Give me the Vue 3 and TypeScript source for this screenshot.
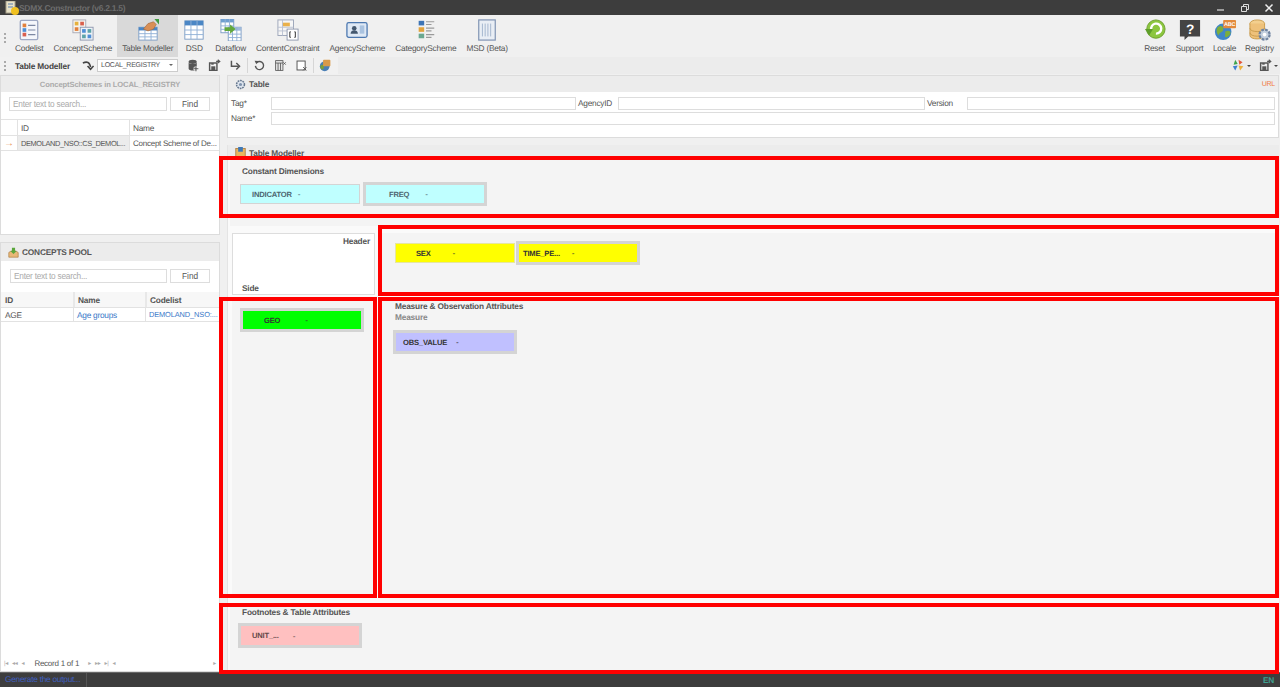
<script setup lang="ts">
type Tool = { label: string; svg: string; active?: boolean };

const tile = (inner: string) => `<svg viewBox="0 0 24 24" width="22" height="22">${inner}</svg>`;

const grid = (x: number, y: number, w: number, h: number, head = '#4a86c5') =>
  `<rect x="${x}" y="${y}" width="${w}" height="${h}" fill="#fff" stroke="#7c9cc4"/>` +
  `<rect x="${x}" y="${y}" width="${w}" height="${h / 4}" fill="${head}"/>` +
  `<path d="M${x} ${y + h / 2}h${w}M${x} ${y + (h * 3) / 4}h${w}M${x + w / 3} ${y}v${h}M${x + (w * 2) / 3} ${y}v${h}" stroke="#8fb0d6" fill="none"/>`;

const leftTools: Tool[] = [
  {
    label: 'Codelist',
    svg: tile(
      '<rect x="2.5" y="1.5" width="19" height="21" rx="1.5" fill="#f4f6fb" stroke="#9fa9c4" stroke-width="1.5"/>' +
        '<rect x="5" y="5" width="4" height="4" fill="#e2803c"/><rect x="5" y="10" width="4" height="4" fill="#4f8fd6"/><rect x="5" y="15" width="4" height="4" fill="#d96050"/>' +
        '<path d="M11 7h8M11 12h8M11 17h8" stroke="#7d88a3" stroke-width="1.2"/>'
    )
  },
  {
    label: 'ConceptScheme',
    svg: tile(
      '<rect x="1" y="1" width="14" height="14" fill="#f6f4ef" stroke="#a9a9b5"/><rect x="3" y="3" width="4" height="4" fill="#e6b13c"/><rect x="9" y="3" width="4" height="4" fill="#d9604c"/><rect x="3" y="9" width="4" height="4" fill="#e2803c"/>' +
        '<rect x="9" y="9" width="14" height="14" fill="#eef2f7" stroke="#8d97ad"/><rect x="11" y="11" width="4" height="4" fill="#4f8fd6"/><rect x="17" y="11" width="4" height="4" fill="#5ba3a8"/><rect x="11" y="17" width="4" height="4" fill="#5ba3a8"/><rect x="17" y="17" width="4" height="4" fill="#4f8fd6"/>'
    )
  },
  {
    label: 'Table Modeller',
    active: true,
    svg: tile(
      grid(2, 9, 20, 14) +
        '<path d="M7 11l5-6 6-2 3 3-3 5-6 2z" fill="#d98f55" stroke="#9a5f33" stroke-width=".6"/><path d="M19 0h5v6z" fill="#3f9b3f"/>'
    )
  },
  { label: 'DSD', svg: tile(grid(2, 2, 20, 20)) },
  {
    label: 'Dataflow',
    svg: tile(
      grid(1, 0, 14, 15, '#6f9fd0') + grid(9, 9, 14, 15, '#9fbadb') + '<path d="M5 9h6V6l6 5-6 5v-3H5z" fill="#62a83c"/>'
    )
  },
  {
    label: 'ContentConstraint',
    svg: tile(
      '<rect x="1" y="1" width="17" height="17" fill="#f6f6f6" stroke="#9aa3b8"/><rect x="6" y="4" width="8" height="4" fill="#e9b04a"/><path d="M1 9h17M1 13h17M6 1v17" stroke="#b9c1d1" fill="none"/>' +
        '<rect x="11" y="11" width="12" height="12" fill="#fff" stroke="#8d97ad"/><path d="M15 14h-1v6h1M19 14h1v6h-1" stroke="#222" fill="none"/>'
    )
  },
  {
    label: 'AgencyScheme',
    svg: tile(
      '<rect x="1" y="4" width="22" height="16" rx="2" fill="#dfe9f5" stroke="#4c78b0" stroke-width="1.4"/><circle cx="9" cy="10" r="2.5" fill="#44586f"/><path d="M5 16c0-5 8-5 8 0z" fill="#44586f"/><rect x="15" y="7" width="5" height="9" fill="#aac3e0"/>'
    )
  },
  {
    label: 'CategoryScheme',
    svg: tile(
      '<rect x="4" y="2" width="6" height="5" fill="#3d74b5"/><rect x="4" y="9" width="6" height="5" fill="#e2a33c"/><rect x="4" y="16" width="6" height="5" fill="#6aa890"/>' +
        '<path d="M12 3h9M12 6h6M12 10h9M12 13h6M12 17h9M12 20h6" stroke="#9a9a9a" stroke-width="1.3"/>'
    )
  },
  {
    label: 'MSD (Beta)',
    svg: tile(
      '<rect x="3" y="1" width="18" height="22" fill="#e9eef5" stroke="#7f93b3" stroke-width="1.3"/><path d="M7 5v14M10 5v14M13 5v14M16 5v14" stroke="#9fb2cc"/>'
    )
  }
];

const rightTools: Tool[] = [
  {
    label: 'Reset',
    svg: tile(
      '<circle cx="13" cy="11" r="10" fill="#8cc63f" stroke="#6b9e2d"/><path d="M8 12a5.5 5.5 0 1 1 5 4" fill="none" stroke="#fff" stroke-width="2.6"/><path d="M1 11h9l-4.500 7z" fill="#5f9e2a"/>'
    )
  },
  {
    label: 'Support',
    svg: `<svg viewBox="0 0 24 24" width="22" height="22"><path d="M1 1h22v18H10l-4 4v-4H1z" fill="#444"/><text x="12" y="16" text-anchor="middle" font-family="Liberation Sans" font-weight="700" font-size="15" fill="#fff">?</text></svg>`
  },
  {
    label: 'Locale',
    svg: `<svg viewBox="0 0 24 24" width="22" height="22"><circle cx="10" cy="14" r="9" fill="#3f86c8"/><path d="M4 9c4-3 7 0 6 3s-4 2-5 6c-2-2-3-6-1-9zM12 14c3-2 6-1 6 1s-3 5-5 5 0-4-1-6z" fill="#7cae3c"/><rect x="10" y="1" width="14" height="9" rx="1" fill="#e28a3c"/><text x="17" y="8" text-anchor="middle" font-family="Liberation Sans" font-weight="700" font-size="6" fill="#fff">ABC</text></svg>`
  },
  {
    label: 'Registry',
    svg: tile(
      '<ellipse cx="9" cy="5" rx="8" ry="4" fill="#f3cf8e" stroke="#c89a4a"/><path d="M1 5v13c0 5 16 5 16 0V5" fill="#eec17a" stroke="#c89a4a"/><path d="M1 10c0 5 16 5 16 0M1 15c0 5 16 5 16 0" fill="none" stroke="#c89a4a"/>' +
        '<circle cx="17" cy="17" r="5.500" fill="#c3cfdd" stroke="#6f83a0" stroke-width="2.4" stroke-dasharray="3 1.300"/><circle cx="17" cy="17" r="2" fill="#fff"/>'
    )
  }
];

const gray = '#555';
const barIcons = {
  db: `<ellipse cx="7" cy="3.500" rx="5" ry="2.500" fill="${gray}"/><path d="M2 4v8c0 3 10 3 10 0V4c0 3-10 3-10 0z" fill="${gray}"/><path d="M11 9v6M8 12h6" stroke="#fff" stroke-width="3"/><path d="M11 9v6M8 12h6" stroke="${gray}" stroke-width="1.400"/>`,
  save: `<path d="M2 5h9v9H2z" fill="none" stroke="${gray}" stroke-width="1.800"/><rect x="4" y="9" width="5" height="5" fill="${gray}"/><rect x="4" y="5" width="3" height="2" fill="${gray}"/><path d="M10 3h4M12 1l2.500 2-2.500 2" fill="none" stroke="${gray}" stroke-width="1.400"/>`,
  enter: `<path d="M3 2v7h9" fill="none" stroke="${gray}" stroke-width="1.800"/><path d="M9 5l4 4-4 4" fill="none" stroke="${gray}" stroke-width="1.800"/>`,
  undo: `<path d="M4.500 4.500a5 5 0 1 1-1.500 4" fill="none" stroke="${gray}" stroke-width="1.700"/><path d="M2 2l5 .5-3 4z" fill="${gray}"/>`,
  del: `<rect x="2" y="2" width="9" height="12" fill="#e4e4e4" stroke="${gray}"/><path d="M2 5h9M5 5v9M8 5v9" stroke="${gray}" fill="none"/><path d="M11.500 4l3 3M14.500 4l-3 3" stroke="${gray}"/>`,
  clear: `<rect x="2.500" y="2.500" width="10" height="11" fill="#fff" stroke="${gray}" stroke-width="1.200"/><path d="M10 10l4 4M14 10l-4 4" stroke="${gray}" stroke-width="1.200"/>`,
  globe: `<circle cx="7" cy="9" r="6" fill="#4a7fb5"/><path d="M2 8c3-2 5 0 4 3s-2 1-3 2c-1-1-2-3-1-5z" fill="#7a9e3c"/><rect x="5" y="1" width="9" height="8" rx="1" fill="#d99a4a"/>`,
  pin: `<path d="M4 1l3 5-5 1z" fill="#3fa34d"/><path d="M8 1l1 6 4-3z" fill="#e2553c"/><path d="M1 9l6-1-3 6z" fill="#3f7fd0"/><path d="M8 8l6 1-4 5z" fill="#eeb23c"/>`
};

const leftBar = ['db', 'save', 'enter'];
const midBar = ['undo', 'del', 'clear'];

const pagerLeft = ['|◂', '◂◂', '◂'];
const pagerRight = ['▸', '▸▸', '▸|', '◂'];

// the red annotation boxes drawn over the screenshot
const marks = [
  { left: 219, top: 156, width: 1060, height: 62 },
  { left: 378, top: 225, width: 901, height: 71 },
  { left: 219, top: 297, width: 158, height: 301 },
  { left: 378, top: 297, width: 901, height: 301 },
  { left: 219, top: 603, width: 1060, height: 71 }
];
</script>

<template>
  <div class="app">
    <header class="titlebar">
      <svg class="app-logo" viewBox="0 0 14 14" width="14" height="14">
        <rect x="1" y="0" width="9" height="12" fill="#e8e2c8" stroke="#a7a08a" />
        <path d="M3 3h5M3 6h5" stroke="#5a7fb0" />
        <circle cx="10" cy="10" r="4" fill="#f0c020" />
      </svg>
      <span class="app-title">SDMX.Constructor (v6.2.1.5)</span>
      <div class="win-btns">
        <svg viewBox="0 0 10 10" width="10" height="10"><path d="M1 7h7" stroke="#ddd" stroke-width="1.200" /></svg>
        <svg viewBox="0 0 10 10" width="10" height="10"><path d="M1.500 3.500h5v5h-5zM3.500 3V1.500h5v5H7" fill="none" stroke="#ddd" /></svg>
        <svg viewBox="0 0 10 10" width="10" height="10"><path d="M1.500 1.500l7 7M8.500 1.500l-7 7" stroke="#eee" stroke-width="1.500" /></svg>
      </div>
    </header>

    <nav class="ribbon">
      <span class="grip"></span>
      <div v-for="t in leftTools" :key="t.label" class="tool" :class="{ active: t.active }">
        <span class="tool-icon" v-html="t.svg"></span>
        <span class="tool-label">{{ t.label }}</span>
      </div>
      <div class="spacer"></div>
      <div v-for="t in rightTools" :key="t.label" class="tool tool-right">
        <span class="tool-icon" v-html="t.svg"></span>
        <span class="tool-label">{{ t.label }}</span>
      </div>
    </nav>

    <div class="toolbar">
      <span class="grip small"></span>
      <b class="bar-title">Table Modeller</b>
      <svg class="bar-arrow" viewBox="0 0 14 12" width="12" height="11">
        <path d="M1 3c5-2 8-1 9 5" fill="none" stroke="#444" stroke-width="1.800" />
        <path d="M6.500 6.500l3.500 4 3.500-4" fill="none" stroke="#444" stroke-width="1.800" />
      </svg>
      <div class="bar-select">LOCAL_REGISTRY<span class="caret"></span></div>
      <div class="bar-group">
        <svg v-for="k in leftBar" :key="k" class="bar-ico" viewBox="0 0 16 16" width="13" height="13" v-html="barIcons[k as keyof typeof barIcons]"></svg>
      </div>
      <span class="bar-sep"></span>
      <div class="bar-group">
        <svg v-for="k in midBar" :key="k" class="bar-ico" viewBox="0 0 16 16" width="13" height="13" v-html="barIcons[k as keyof typeof barIcons]"></svg>
      </div>
      <span class="bar-sep"></span>
      <svg class="bar-ico" viewBox="0 0 16 16" width="13" height="13" v-html="barIcons.globe"></svg>
      <div class="spacer"></div>
      <svg class="bar-ico" viewBox="0 0 16 16" width="13" height="13" v-html="barIcons.pin"></svg>
      <span class="caret tiny"></span>
      <svg class="bar-ico last" viewBox="0 0 16 16" width="13" height="13" v-html="barIcons.save"></svg>
      <span class="caret tiny"></span>
    </div>

    <main class="content">
      <aside class="sidebar">
        <section class="side-panel top">
          <div class="panel-head center">ConceptSchemes in LOCAL_REGISTRY</div>
          <div class="search">
            <input class="search-input" placeholder="Enter text to search..." />
            <button class="find">Find</button>
          </div>
          <div class="row head-row schemes">
            <span class="cell"></span><span class="cell">ID</span><span class="cell">Name</span>
          </div>
          <div class="row schemes">
            <span class="cell arrow">→</span>
            <span class="cell picked">DEMOLAND_NSO::CS_DEMOL...</span>
            <span class="cell tiny-text">Concept Scheme of De...</span>
          </div>
        </section>

        <section class="side-panel bottom">
          <div class="panel-head">
            <svg viewBox="0 0 14 14" width="11" height="11">
              <path d="M1 7l3-2h6l3 2v6H1z" fill="#e8b878" stroke="#a9763a" stroke-width=".8" />
              <path d="M5 1h4v4h2L7 9 3 5h2z" fill="#5aa63c" />
            </svg>
            <b>CONCEPTS POOL</b>
          </div>
          <div class="search pool">
            <input class="search-input" placeholder="Enter text to search..." />
            <button class="find">Find</button>
          </div>
          <div class="row pool-head concepts">
            <b class="cell">ID</b><b class="cell">Name</b><b class="cell">Codelist</b>
          </div>
          <div class="row concepts">
            <span class="cell">AGE</span>
            <span class="cell link">Age groups</span>
            <span class="cell link caps">DEMOLAND_NSO:...</span>
          </div>
          <div class="pager">
            <span v-for="(p, i) in pagerLeft" :key="i" class="pg">{{ p }}</span>
            <span class="pg-text">Record 1 of 1</span>
            <span v-for="(p, i) in pagerRight" :key="i" class="pg">{{ p }}</span>
            <span class="spacer"></span>
            <span class="pg">▸</span>
          </div>
        </section>
      </aside>

      <div class="workspace">
        <section class="table-panel">
          <div class="panel-head">
            <svg viewBox="0 0 14 14" width="11" height="11">
              <circle cx="7" cy="7" r="5" fill="#dfe6ef" stroke="#66788f" stroke-width="2" stroke-dasharray="2.200 1" />
              <circle cx="7" cy="7" r="2" fill="#7f93ad" />
            </svg>
            <b>Table</b>
            <span class="spacer"></span>
            <span class="url">URL</span>
          </div>
          <div class="form">
            <label>Tag*</label><input class="f-tag" />
            <label class="f-l2">AgencyID</label><input class="f-agency" />
            <label class="f-l3">Version</label><input class="f-version" />
          </div>
          <div class="form">
            <label>Name*</label><input class="f-name" />
          </div>
        </section>

        <section class="modeller">
          <div class="panel-head short">
            <svg viewBox="0 0 14 14" width="11" height="11">
              <rect x="1" y="2" width="12" height="11" fill="#e9b65f" stroke="#a9763a" />
              <rect x="4" y="0" width="6" height="6" fill="#3f78b5" />
            </svg>
            <b>Table Modeller</b>
          </div>

          <div class="zone constants">
            <b class="zone-title">Constant Dimensions</b>
            <div class="chips">
              <div class="chip cyan c-indicator"><b>INDICATOR</b><i>-</i></div>
              <div class="chip cyan framed c-freq"><b>FREQ</b><i>-</i></div>
            </div>
          </div>

          <div class="pivot">
            <div class="corner">
              <b class="c-header">Header</b>
              <b class="c-side">Side</b>
            </div>
            <div class="zone header-zone">
              <div class="chips">
                <div class="chip yellow c-sex"><b>SEX</b><i>-</i></div>
                <div class="chip yellow framed c-time"><b>TIME_PE...</b><i>-</i></div>
              </div>
            </div>
            <div class="zone side-zone">
              <div class="chip green framed c-geo"><b>GEO</b><i>-</i></div>
            </div>
            <div class="zone measure-zone">
              <b class="zone-title">Measure &amp; Observation Attributes</b>
              <b class="zone-sub">Measure</b>
              <div class="chip violet framed c-obs"><b>OBS_VALUE</b><i>-</i></div>
            </div>
          </div>

          <div class="zone footer-zone">
            <b class="zone-title">Footnotes &amp; Table Attributes</b>
            <div class="chip pink framed c-unit"><b>UNIT_...</b><i>-</i></div>
          </div>
        </section>
      </div>
    </main>

    <footer class="statusbar">
      <span class="status-msg">Generate the output...</span>
      <span class="spacer"></span>
      <span class="lang">EN</span>
    </footer>

    <div v-for="(m, i) in marks" :key="i" class="mark" :style="{ left: m.left + 'px', top: m.top + 'px', width: m.width + 'px', height: m.height + 'px' }"></div>
  </div>
</template>

<style>
html,
body {
  margin: 0;
  background: #f0f0f0;
  overflow: hidden;
}
</style>

<style scoped>
* {
  box-sizing: border-box;
}

.app {
  position: relative;
  width: 1280px;
  height: 687px;
  display: flex;
  flex-direction: column;
  overflow: hidden;
  background: #f0f0f0;
  font-family: "Liberation Sans", Arial, sans-serif;
  font-size: 8.3px;
  letter-spacing: -0.25px;
  text-rendering: geometricPrecision;
  color: #555;
}

b {
  letter-spacing: -0.18px;
}

.spacer {
  flex: 1;
}

.titlebar {
  height: 15px;
  flex: none;
  background: #3d3d3d;
  display: flex;
  align-items: center;
  padding-left: 5px;
}

.app-title {
  font-weight: 700;
  color: #6c6c6c;
  font-size: 8.5px;
  letter-spacing: -0.3px;
}

.win-btns {
  margin-left: auto;
  display: flex;
  gap: 14px;
  padding-right: 6px;
}

.ribbon {
  height: 42px;
  flex: none;
  display: flex;
  padding: 0 3px 0 10px;
  position: relative;
}

.grip {
  position: absolute;
  left: 4px;
  top: 18px;
  width: 2px;
  height: 10px;
  background: repeating-linear-gradient(#aaa 0 2px, transparent 2px 4px);
}

.grip.small {
  top: 61px;
  left: 4px;
}

.tool {
  height: 42px;
  padding: 3px 5px 0;
  display: flex;
  flex-direction: column;
  align-items: center;
}

.tool.active {
  background: #d9d9d9;
}

.tool-right {
  padding: 3px 3px 0;
  width: 35px;
}

.tool-icon {
  height: 24px;
  display: flex;
  align-items: center;
}

.tool-label {
  white-space: nowrap;
  line-height: 13px;
  letter-spacing: -0.2px;
  color: #555;
}

.toolbar {
  height: 17px;
  flex: none;
  display: flex;
  align-items: center;
  padding-left: 15px;
  padding-right: 2px;
  background: linear-gradient(90deg, #f1f1f1 338px, #ececec 338px);
}

.bar-title {
  width: 66px;
  color: #444;
  white-space: nowrap;
}

.bar-arrow {
  margin: 0 3px 0 1px;
}

.bar-select {
  width: 81px;
  height: 13px;
  background: #fff;
  border: 1px solid #ccc;
  line-height: 11px;
  padding-left: 3px;
  position: relative;
  margin-right: 9px;
  font-size: 7px;
  letter-spacing: -0.25px;
}

.caret {
  position: absolute;
  right: 4px;
  top: 4px;
  border: 2.500px solid transparent;
  border-top-color: #666;
  border-bottom: 0;
}

.caret.tiny {
  position: static;
  display: inline-block;
  margin-left: 2px;
  border-top-color: #444;
}

.bar-group {
  display: flex;
  gap: 8px;
}

.bar-ico {
  display: block;
  flex: none;
}

.bar-ico.last {
  margin-left: 8px;
}

.bar-sep {
  width: 1px;
  height: 15px;
  background: #d6d6d6;
  margin: 0 5px;
}

.content {
  flex: 1;
  min-height: 0;
  display: flex;
  padding-top: 1px;
}

.sidebar {
  width: 220px;
  flex: none;
  display: flex;
  flex-direction: column;
  gap: 7px;
}

.side-panel {
  background: #fff;
  border: 1px solid #dcdcdc;
}

.side-panel.top {
  height: 160px;
}

.side-panel.bottom {
  flex: 1;
  display: flex;
  flex-direction: column;
}

.panel-head {
  height: 16px;
  background: #ececec;
  display: flex;
  align-items: center;
  gap: 3px;
  padding-left: 7px;
  color: #555;
}

.side-panel.bottom .panel-head {
  height: 18px;
}

.panel-head.center {
  justify-content: center;
  padding-left: 0;
  font-weight: 700;
  font-size: 7.600px;
  letter-spacing: -0.1px;
  color: #aaa;
}

.search {
  display: flex;
  padding: 5px 9px 8px 8px;
  gap: 3px;
}

.search.pool {
  padding: 8px 9px 9px 9px;
}

.search-input {
  width: 158px;
  height: 14px;
  border: 1px solid #ddd;
  padding: 0 3px;
  font: inherit;
  letter-spacing: inherit;
  outline: none;
}

.search-input::placeholder {
  color: #aaa;
}

.find {
  width: 40px;
  height: 14px;
  padding: 0;
  background: #fff;
  border: 1px solid #ddd;
  font: inherit;
  color: #555;
}

.row {
  display: grid;
  border-top: 1px solid #e2e2e2;
  border-bottom: 1px solid #e2e2e2;
  margin-bottom: -1px;
  background: #fff;
}

.schemes {
  grid-template-columns: 16px 112px 1fr;
  height: 16px;
}

.concepts {
  grid-template-columns: 72px 72px 1fr;
  height: 15px;
}

.head-row {
  height: 17px;
}

.pool-head {
  background: #f7f7f7;
  border: 0;
  margin: 0;
}

.cell {
  display: flex;
  align-items: center;
  padding-left: 3px;
  border-left: 1px solid #e2e2e2;
  white-space: nowrap;
  overflow: hidden;
  font-weight: 400;
}

.pool-head .cell {
  font-weight: 700;
  border-left: 2px solid #e8e8e8;
}

.row .cell:first-child {
  border-left: 0;
}

.concepts .cell:first-child {
  padding-left: 4px;
}

.arrow {
  color: #e8904a;
  font-size: 10px;
}

.picked {
  background: #ececec;
  font-size: 7.400px;
  letter-spacing: -0.35px;
}

.tiny-text {
  font-size: 8px;
}

.caps {
  font-size: 7.400px;
  letter-spacing: -0.1px;
}

.link {
  color: #3a78c8;
}

.pager {
  margin-top: auto;
  height: 13px;
  margin-bottom: 1px;
  display: flex;
  align-items: center;
  padding: 0 3px;
  gap: 4px;
  color: #aaa;
  font-size: 6px;
}

.pg-text {
  font-size: 8px;
  color: #555;
  margin: 0 5px 0 6px;
}

.workspace {
  flex: 1;
  min-width: 0;
  display: flex;
  flex-direction: column;
  padding: 0 1px 0 7px;
  gap: 7px;
}

.table-panel {
  height: 63px;
  flex: none;
  background: #fff;
  border: 1px solid #dcdcdc;
}

.form {
  display: flex;
  align-items: center;
  height: 15px;
  padding-left: 3px;
}

.panel-head + .form {
  margin-top: 4px;
}

.form label {
  width: 40px;
  flex: none;
  color: #555;
  margin-top: -1px;
}

.form input {
  height: 13px;
  border: 1px solid #ddd;
  outline: none;
  background: #fff;
}

.form .f-l2,
.form .f-l3 {
  margin-left: 2px;
}

.f-tag {
  width: 305px;
}

.f-agency {
  width: 307px;
}

.f-version {
  width: 308px;
}

.f-name {
  width: 1004px;
}

.url {
  color: #f07840;
  font-size: 7px;
  padding-right: 3px;
}

.modeller {
  flex: 1;
  min-height: 0;
  background: #fafafa;
  border-left: 1px solid #e4e4e4;
  display: flex;
  flex-direction: column;
}

.panel-head.short {
  height: 15px;
  flex: none;
}

.zone {
  background: #f4f4f4;
}

.constants {
  height: 66px;
  margin: 0 0 7px 2px;
  padding: 5px 12px;
}

.zone-title {
  display: block;
  line-height: 12px;
  color: #555;
}

.chips {
  display: flex;
  align-items: center;
}

.constants .chips {
  margin-top: 5px;
  margin-left: -2px;
}

.chip {
  width: 120px;
  height: 20px;
  flex: none;
  display: flex;
  align-items: center;
  border: 1px solid #d4d4d4;
  color: #333;
}

.chip b {
  font-size: 7.600px;
  letter-spacing: -0.2px;
}

.chip i {
  font-style: normal;
}

.chip.framed {
  width: 124px;
  height: 24px;
  border: 3px solid #d4d4d4;
  margin-left: 3px;
}

/* each cell keeps its own label and dash offsets */
.c-indicator b { margin-left: 11px; }
.c-indicator i { margin-left: 6px; }
.c-freq b { margin-left: 23px; }
.c-freq i { margin-left: 16px; }
.c-sex b { margin-left: 20px; }
.c-sex i { margin-left: 22px; }
.c-time b { margin-left: 4px; }
.c-time i { margin-left: 12px; }
.c-geo b { margin-left: 21px; }
.c-geo i { margin-left: 25px; }
.c-obs b { margin-left: 7px; }
.c-obs i { margin-left: 9px; }
.c-unit b { margin-left: 11px; }
.c-unit i { margin-left: 14px; }

.chip.c-time {
  margin-left: 1px;
}

.cyan {
  background: #bfffff;
  color: #4d6670;
}

.yellow {
  background: #ffff00;
  border-color: #e6e6a0;
}

.green {
  background: #00ff00;
}

.violet {
  background: #c0c0ff;
}

.pink {
  background: #ffc0c0;
  color: #664a4a;
}

.pivot {
  flex: 1;
  min-height: 0;
  display: grid;
  grid-template-columns: 143px 1fr;
  grid-template-rows: 62px 1fr;
  column-gap: 7px;
  row-gap: 4px;
  margin-left: 4px;
}

.corner {
  background: #fff;
  border: 1px solid #ddd;
  display: flex;
  flex-direction: column;
  justify-content: space-between;
  padding: 2px 4px 1px 9px;
  color: #555;
}

.c-header {
  align-self: flex-end;
}

.header-zone {
  padding: 8px 0 0 13px;
  margin-right: 3px;
}

.side-zone {
  padding: 9px 0 0 8px;
}

.side-zone .chip {
  margin-left: 0;
}

.measure-zone {
  margin-right: 3px;
  padding: 1px 0 0 13px;
}

.zone-sub {
  display: block;
  line-height: 11px;
  margin: 0 0 7px;
  color: #888;
}

.measure-zone .chip {
  margin-left: -2px;
}

.footer-zone {
  height: 64px;
  flex: none;
  margin: 8px 4px 2px 2px;
  padding: 0 0 0 12px;
}

.footer-zone .zone-title {
  margin-bottom: 5px;
}

.footer-zone .chip {
  margin-left: -4px;
  height: 25px;
}

.statusbar {
  height: 15px;
  flex: none;
  background: #3d3d3d;
  border-top: 1px solid #666;
  display: flex;
  align-items: center;
}

.status-msg {
  width: 87px;
  padding: 0 5px;
  height: 100%;
  color: #3f5fc0;
  border-right: 1px solid #555;
  line-height: 13px;
  white-space: nowrap;
}

.lang {
  color: #3fa090;
  font-weight: 700;
  padding-right: 6px;
}

.mark {
  position: absolute;
  border: 4px solid #ff0000;
  pointer-events: none;
}
</style>
